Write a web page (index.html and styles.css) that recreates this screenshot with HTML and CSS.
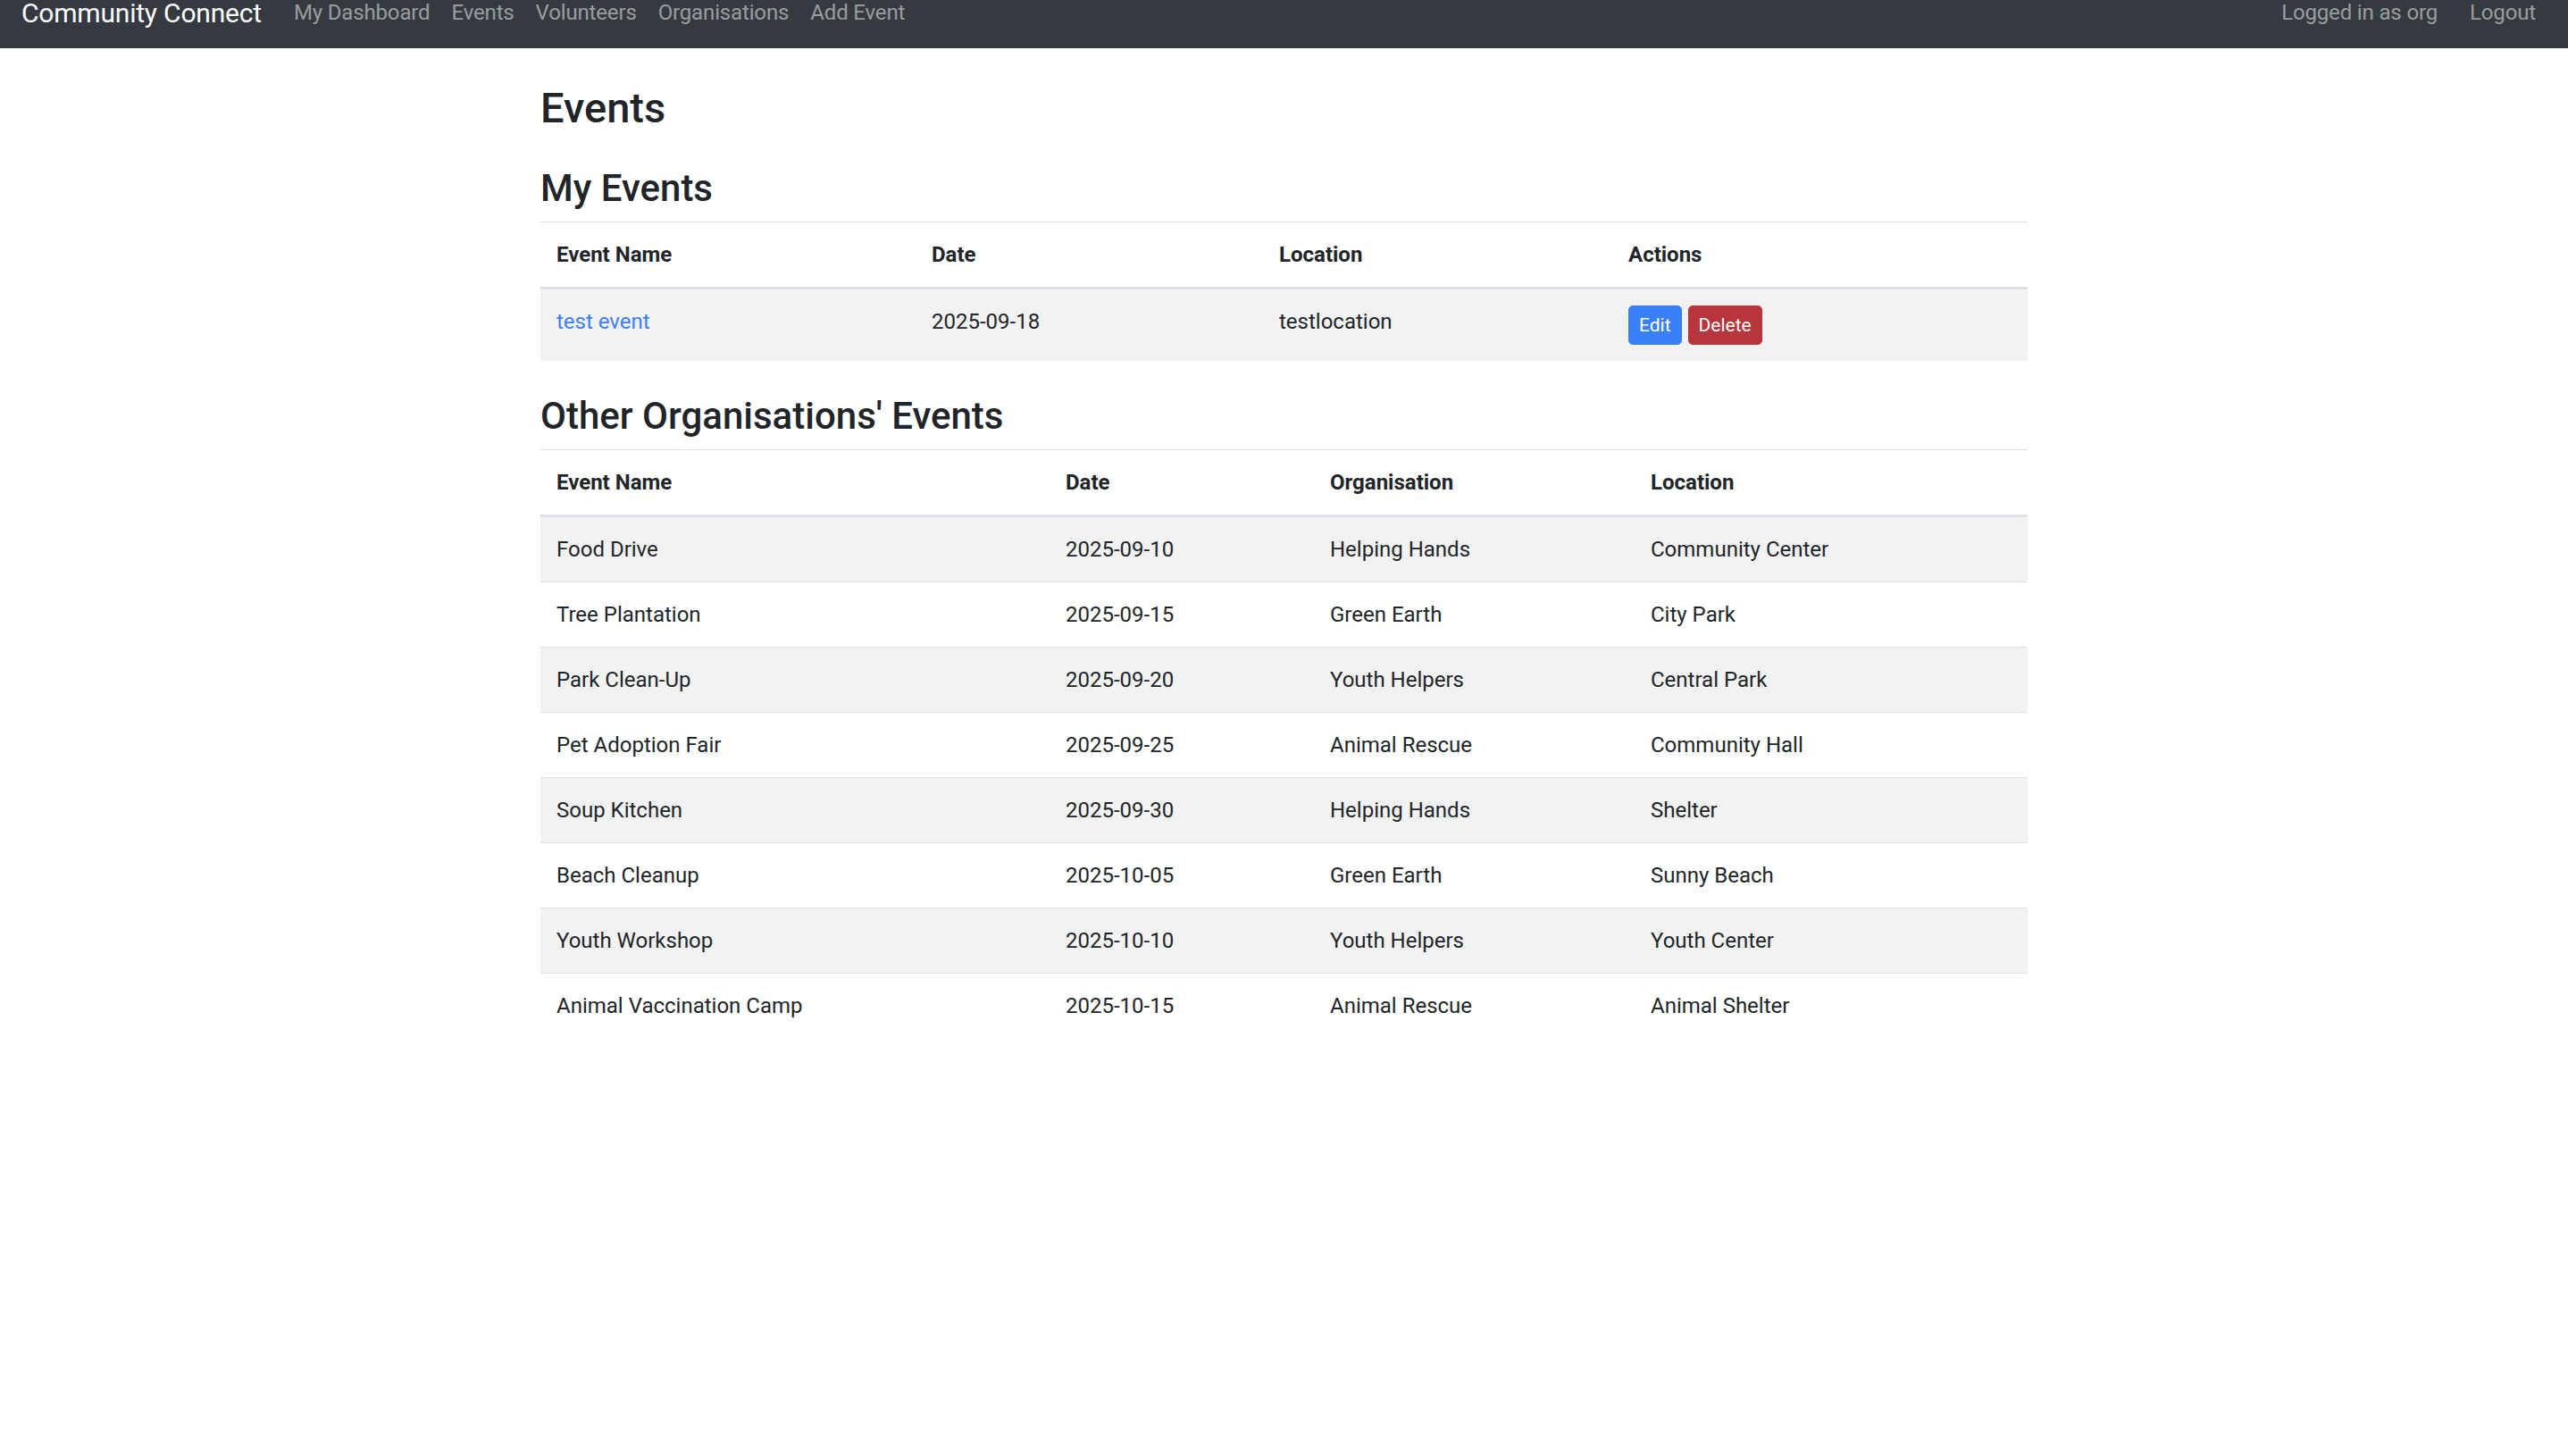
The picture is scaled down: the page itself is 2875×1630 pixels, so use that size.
FILE: index.html
```html
<!DOCTYPE html>
<html lang="en">
<head>
<meta charset="utf-8">
<title>Events - Community Connect</title>
<link rel="stylesheet" href="styles.css">
</head>
<body>
<nav class="navbar">
  <a class="brand" href="#">Community Connect</a>
  <ul class="nav">
    <li><a class="nav-link" href="#">My Dashboard</a></li>
    <li><a class="nav-link" href="#">Events</a></li>
    <li><a class="nav-link" href="#">Volunteers</a></li>
    <li><a class="nav-link" href="#">Organisations</a></li>
    <li><a class="nav-link" href="#">Add Event</a></li>
  </ul>
  <ul class="nav nav-right">
    <li><span class="nav-text">Logged in as org</span></li>
    <li><a class="nav-link" href="#">Logout</a></li>
  </ul>
</nav>

<main class="container">
  <h2 class="page-title">Events</h2>

  <section class="section">
    <h3 class="section-title">My Events</h3>
    <table class="table">
      <colgroup>
        <col class="my-c1"><col class="my-c2"><col class="my-c3"><col class="my-c4">
      </colgroup>
      <thead>
        <tr><th>Event Name</th><th>Date</th><th>Location</th><th>Actions</th></tr>
      </thead>
      <tbody>
        <tr>
          <td><a class="link" href="#">test event</a></td>
          <td>2025-09-18</td>
          <td>testlocation</td>
          <td><div class="actions"><a class="btn btn-primary" href="#">Edit</a><a class="btn btn-danger" href="#">Delete</a></div></td>
        </tr>
      </tbody>
    </table>
  </section>

  <section class="section">
    <h3 class="section-title">Other Organisations' Events</h3>
    <table class="table">
      <colgroup>
        <col class="ot-c1"><col class="ot-c2"><col class="ot-c3"><col class="ot-c4">
      </colgroup>
      <thead>
        <tr><th>Event Name</th><th>Date</th><th>Organisation</th><th>Location</th></tr>
      </thead>
      <tbody>
        <tr><td>Food Drive</td><td>2025-09-10</td><td>Helping Hands</td><td>Community Center</td></tr>
        <tr><td>Tree Plantation</td><td>2025-09-15</td><td>Green Earth</td><td>City Park</td></tr>
        <tr><td>Park Clean-Up</td><td>2025-09-20</td><td>Youth Helpers</td><td>Central Park</td></tr>
        <tr><td>Pet Adoption Fair</td><td>2025-09-25</td><td>Animal Rescue</td><td>Community Hall</td></tr>
        <tr><td>Soup Kitchen</td><td>2025-09-30</td><td>Helping Hands</td><td>Shelter</td></tr>
        <tr><td>Beach Cleanup</td><td>2025-10-05</td><td>Green Earth</td><td>Sunny Beach</td></tr>
        <tr><td>Youth Workshop</td><td>2025-10-10</td><td>Youth Helpers</td><td>Youth Center</td></tr>
        <tr><td>Animal Vaccination Camp</td><td>2025-10-15</td><td>Animal Rescue</td><td>Animal Shelter</td></tr>
      </tbody>
    </table>
  </section>
</main>
</body>
</html>
```

FILE: styles.css
```css
* { box-sizing: border-box; }

html, body {
  margin: 0;
  padding: 0;
  background: #ffffff;
}

body {
  font-family: Roboto, "Liberation Sans", Arial, sans-serif;
  font-size: 24px;
  line-height: 36px;
  color: #212529;
}

a { text-decoration: none; }

/* Navbar */
.navbar {
  display: flex;
  align-items: flex-start;
  height: 54px;
  padding: 0 24px;
  background: #343a40;
}

.brand {
  font-size: 30px;
  line-height: 30px;
  margin-top: 0;
  margin-right: 24px;
  color: #ffffff;
  white-space: nowrap;
  letter-spacing: -0.2px;
}

.nav {
  display: flex;
  list-style: none;
  margin: 0;
  padding: 0;
}

.nav-right { margin-left: auto; }

.nav-link,
.nav-text {
  display: block;
  font-size: 24px;
  line-height: 28px;
  padding: 0 12px;
  color: rgba(255, 255, 255, 0.5);
  white-space: nowrap;
  letter-spacing: -0.15px;
}

.nav-text {
  padding: 0;
  margin-right: 24px;
}

/* Content */
.container {
  width: 1665px;
  margin: 0 auto;
  padding-top: 38px;
}

.page-title {
  font-size: 47px;
  line-height: 57.6px;
  font-weight: 500;
  margin: 0 0 36px 0;
}

.section { margin-bottom: 37px; }

.section-title {
  font-size: 42px;
  line-height: 50.4px;
  font-weight: 500;
  margin: 0 0 12px 0;
}

.table {
  width: 100%;
  border-collapse: collapse;
  table-layout: fixed;
}

.table th,
.table td {
  padding: 18px;
  line-height: 36px;
  text-align: left;
  vertical-align: top;
  border-top: 1px solid #dee2e6;
}

.table th {
  font-weight: 700;
  border-bottom: 3px solid #dee2e6;
}

.table tbody tr:nth-child(odd) { background: #f2f2f2; }

.my-c1 { width: 420px; }
.my-c2 { width: 389px; }
.my-c3 { width: 391px; }
.my-c4 { width: 465px; }

.ot-c1 { width: 570px; }
.ot-c2 { width: 296px; }
.ot-c3 { width: 359px; }
.ot-c4 { width: 440px; }

.link { color: #3b80f5; }

.actions {
  display: flex;
  gap: 7px;
}

.btn {
  display: block;
  font-size: 21px;
  line-height: 30px;
  padding: 6px 11px;
  border: 1px solid transparent;
  border-radius: 5px;
  color: #ffffff;
}

.btn-primary { background: #397ff6; border-color: #397ff6; }
.btn-danger { background: #b7353b; border-color: #b7353b; }
```
